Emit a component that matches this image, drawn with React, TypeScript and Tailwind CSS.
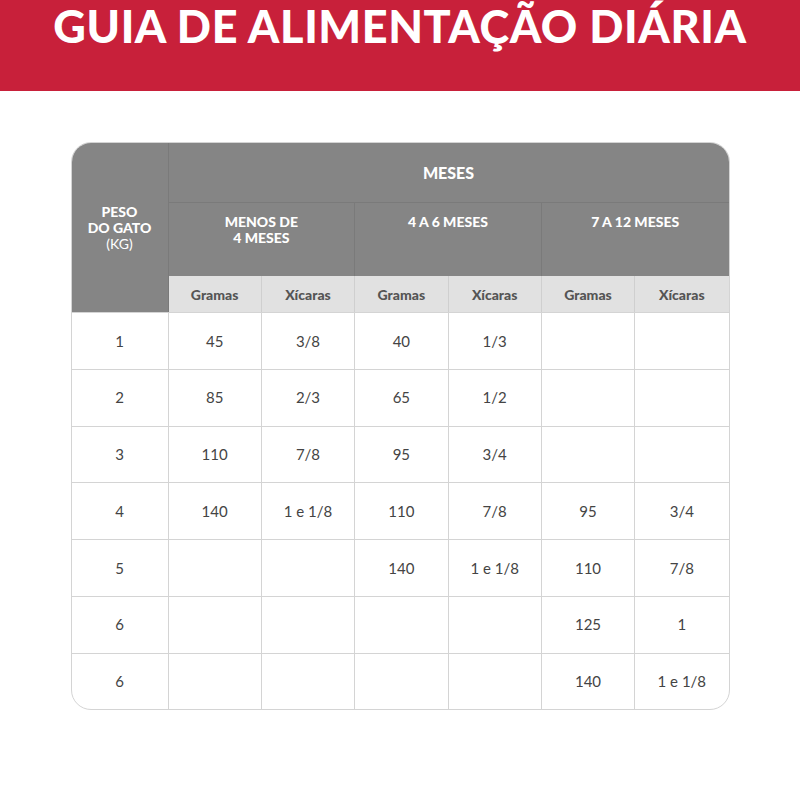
const rows: Array<[string, string, string, string, string, string, string]> = [
  ['1', '45', '3/8', '40', '1/3', '', ''],
  ['2', '85', '2/3', '65', '1/2', '', ''],
  ['3', '110', '7/8', '95', '3/4', '', ''],
  ['4', '140', '1 e 1/8', '110', '7/8', '95', '3/4'],
  ['5', '', '', '140', '1 e 1/8', '110', '7/8'],
  ['6', '', '', '', '', '125', '1'],
  ['6', '', '', '', '', '140', '1 e 1/8'],
];

const groups = [['MENOS DE', '4 MESES'], ['4 A 6 MESES'], ['7 A 12 MESES']];

export default function App() {
  return (
    <div className="w-[800px] h-[800px] bg-white font-['Lato',sans-serif]">
      {/* Title band */}
      <div className="h-[91px] bg-[#c8203a] flex justify-center pt-[2px]">
        <h1 className="text-white font-black text-[45px] leading-[48px] tracking-[0.6px]">
          GUIA DE ALIMENTAÇÃO DIÁRIA
        </h1>
      </div>

      <div className="flex justify-center pt-[51px]">
        <div className="w-[659px] rounded-[20px] border border-[#d4d4d4] overflow-hidden">
          <div className="grid grid-cols-[97px_repeat(6,1fr)] grid-rows-[60px_73px_36px]">
            {/* Peso column */}
            <div className="row-span-3 bg-[#858585] border-r border-[#7a7a7a] flex flex-col items-center pt-[61px] text-white text-[14px] leading-[16px]">
              <span className="font-black">PESO</span>
              <span className="font-black">DO GATO</span>
              <span>(KG)</span>
            </div>
            <div className="col-span-6 bg-[#858585] border-b border-[#7a7a7a] flex justify-center pt-[18px] text-white font-black text-[16px]">
              MESES
            </div>
            {groups.map((g, i) => (
              <div
                key={i}
                className={`col-span-2 bg-[#858585] flex flex-col items-center pt-[11px] text-white font-black text-[14px] leading-[16px] ${i < 2 ? 'border-r border-[#7a7a7a]' : ''}`}
              >
                {g.map((l) => (
                  <span key={l}>{l}</span>
                ))}
              </div>
            ))}
            {[0, 1, 2, 3, 4, 5].map((i) => (
              <div
                key={i}
                className={`bg-[#e1e1e1] flex items-center justify-center text-[#555555] font-black text-[14px] ${i < 5 ? 'border-r border-[#cfcfcf]' : ''}`}
              >
                {i % 2 === 0 ? 'Gramas' : 'Xícaras'}
              </div>
            ))}
          </div>

          {rows.map((r, ri) => (
            <div
              key={ri}
              className="grid grid-cols-[97px_repeat(6,1fr)] h-[56.75px] border-t border-[#d4d4d4]"
            >
              {r.map((c, ci) => (
                <div
                  key={ci}
                  className={`flex items-center justify-center text-[#444444] text-[15px] ${ci < 6 ? 'border-r border-[#d4d4d4]' : ''}`}
                >
                  {c}
                </div>
              ))}
            </div>
          ))}
        </div>
      </div>
    </div>
  );
}
